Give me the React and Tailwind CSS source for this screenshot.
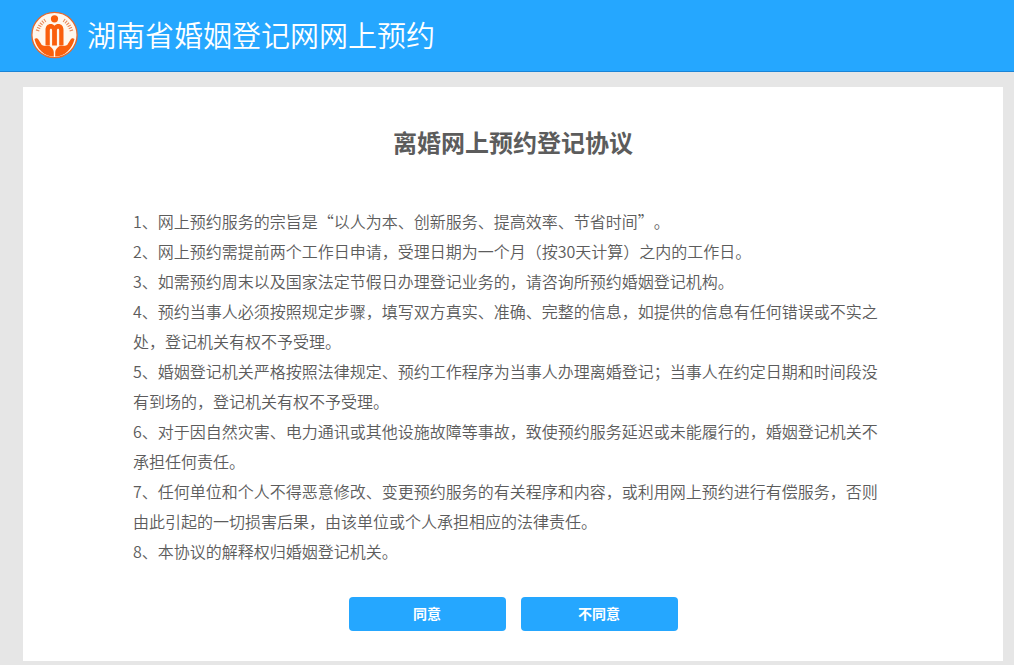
import React, { useState } from 'react';

const terms = [
  '网上预约服务的宗旨是“以人为本、创新服务、提高效率、节省时间”。',
  '网上预约需提前两个工作日申请，受理日期为一个月（按30天计算）之内的工作日。',
  '如需预约周末以及国家法定节假日办理登记业务的，请咨询所预约婚姻登记机构。',
  '预约当事人必须按照规定步骤，填写双方真实、准确、完整的信息，如提供的信息有任何错误或不实之处，登记机关有权不予受理。',
  '婚姻登记机关严格按照法律规定、预约工作程序为当事人办理离婚登记；当事人在约定日期和时间段没有到场的，登记机关有权不予受理。',
  '对于因自然灾害、电力通讯或其他设施故障等事故，致使预约服务延迟或未能履行的，婚姻登记机关不承担任何责任。',
  '任何单位和个人不得恶意修改、变更预约服务的有关程序和内容，或利用网上预约进行有偿服务，否则由此引起的一切损害后果，由该单位或个人承担相应的法律责任。',
  '本协议的解释权归婚姻登记机关。',
];

// Civil affairs emblem: a figure held by two hands inside a ring
const Logo = () => (
  <svg viewBox="0 0 48 48" className="h-12 w-12 shrink-0" aria-hidden="true">
    <circle cx="23.5" cy="24" r="22.600" fill="#fff8ee" stroke="#e8692c" strokeWidth="1.300" />
    <g fill="#fa5f0c">
      <circle cx="23.5" cy="7.800" r="3.600" />
      <path d="M14.500 34.500V19c0-4 2.300-6 5.200-6 1.600 0 2.900.6 3.800 1.800.9-1.200 2.200-1.800 3.800-1.800 2.900 0 5.200 2 5.200 6v15.500h-4.300V19.600c0-1.300-.4-1.900-1.100-1.900s-1.200.6-1.200 1.900v14.900h-4.800V19.600c0-1.300-.5-1.900-1.200-1.900s-1.100.6-1.100 1.900v14.900z" />
      <path d="M3.500 28c1.600-1.200 3.200-.8 4.200.9l3.100 5c1.500.8 3.100 1.100 5 1 1.600-.4 3 0 4 1.100 1.800 1.700 3 3.200 3 5.400v4.200c-4.600-.1-9-1.900-12.300-5.100-3.700-3.600-5.900-7.800-7-12.500z" />
      <path d="M43.500 28c-1.600-1.200-3.200-.8-4.200.9l-3.100 5c-1.500.8-3.100 1.100-5 1-1.600-.4-3 0-4 1.100-1.800 1.700-3 3.200-3 5.400v4.200c4.600-.1 9-1.900 12.300-5.100 3.700-3.600 5.900-7.800 7-12.500z" />
    </g>
    <g fill="none" stroke="#e98a5c" strokeWidth="3.600" strokeDasharray="1.100 1.400">
      <path d="M6.500 20Q9 12 15.500 8.500" />
      <path d="M40.500 20Q38 12 31.500 8.500" />
    </g>
  </svg>
);

const App = () => {
  const [agreed, setAgreed] = useState(null);

  const buttonClass =
    'h-[34px] w-[157px] cursor-pointer rounded bg-[#25a7ff] pb-0.5 text-sm font-bold text-white hover:bg-[#1696ee]';

  return (
    <div
      lang="zh-CN"
      className="flex min-h-screen flex-col bg-[#e6e6e6] font-['Noto_Sans_CJK_SC',sans-serif] text-[#5c5c5c] [text-spacing-trim:space-all]"
    >
      <header className="flex h-[72px] items-center gap-2 border-b border-[#1b84d6] bg-[#25a7ff] px-[31px] pb-0.5">
        <Logo />
        <span className="text-[29px] font-[350] text-white">湖南省婚姻登记网网上预约</span>
      </header>

      <main className="mt-[15px] mr-[11px] mb-1 ml-[23px] flex-1 bg-white px-[110px] pt-[37px] pb-[30px]">
        <h1 className="text-center text-2xl leading-9 font-bold">离婚网上预约登记协议</h1>

        <div className="mt-[46px] text-base leading-[30px] font-[350]">
          {terms.map((term, i) => (
            <p key={i}>{`${i + 1}、${term}`}</p>
          ))}
        </div>

        <div className="mt-[31px] flex justify-center gap-[15px]">
          <button type="button" aria-pressed={agreed === true} onClick={() => setAgreed(true)} className={buttonClass}>
            同意
          </button>
          <button type="button" aria-pressed={agreed === false} onClick={() => setAgreed(false)} className={buttonClass}>
            不同意
          </button>
        </div>
      </main>
    </div>
  );
};

export default App;
